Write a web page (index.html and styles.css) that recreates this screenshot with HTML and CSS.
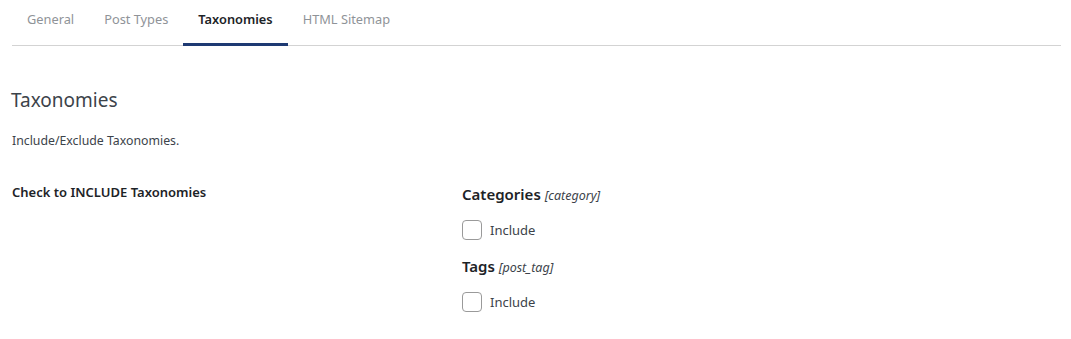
FILE: index.html
```html
<!DOCTYPE html>
<html lang="en">
<head>
    <meta charset="UTF-8">
    <meta name="viewport" content="width=device-width, initial-scale=1.0">
    <title>Taxonomies</title>
    <link rel="stylesheet" href="styles.css">
</head>
<body>
    <div class="wrap">
        <nav class="tabs">
            <a class="tab">General</a>
            <a class="tab">Post Types</a>
            <a class="tab active">Taxonomies</a>
            <a class="tab">HTML Sitemap</a>
        </nav>

        <section class="panel">
            <h2 class="title">Taxonomies</h2>
            <p class="desc">Include/Exclude Taxonomies.</p>

            <div class="row">
                <div class="row-label">Check to INCLUDE Taxonomies</div>
                <div class="row-field">
                    <div class="tax">
                        <div class="tax-name">Categories <em>[category]</em></div>
                        <label class="check"><span class="box"></span>Include</label>
                    </div>
                    <div class="tax">
                        <div class="tax-name">Tags <em>[post_tag]</em></div>
                        <label class="check"><span class="box"></span>Include</label>
                    </div>
                </div>
            </div>
        </section>
    </div>
</body>
</html>
```

FILE: styles.css
```css
body {
    margin: 0;
    background-color: #ffffff;
    font-family: "Noto Sans", "Open Sans", Arial, sans-serif;
    color: #3c434a;
}

.wrap {
    padding: 0 10px 0 12px;
}

.tabs {
    display: flex;
    border-bottom: 1px solid #d3d3d3;
    height: 45px;
}

.tab {
    display: flex;
    align-items: center;
    padding: 0 15px 5px;
    font-size: 12.8px;
    color: #8f9398;
    cursor: pointer;
    border-bottom: 3px solid transparent;
    margin-bottom: -1px;
}

.tab.active {
    color: #1d2327;
    font-weight: 600;
    border-bottom-color: #1e3a73;
}

.panel {
    padding-top: 41px;
}

.title {
    margin: 0;
    font-size: 19px;
    font-weight: 400;
    color: #3c434a;
    line-height: 26px;
    margin-left: -1px;
}

.desc {
    margin: 20px 0 0;
    font-size: 12.3px;
    line-height: 16px;
    color: #3c434a;
}

.row {
    display: flex;
    margin-top: 33px;
}

.row-label {
    width: 450px;
    font-size: 13px;
    font-weight: 600;
    color: #1d2327;
    line-height: 20px;
}

.row-field {
    display: flex;
    flex-direction: column;
    gap: 16px;
    padding-top: 2px;
}

.tax-name {
    font-size: 15px;
    font-weight: 600;
    color: #1d2327;
    line-height: 20px;
}

.tax-name em {
    font-size: 12.5px;
    font-weight: 400;
    color: #3c434a;
}

.check {
    display: flex;
    align-items: center;
    gap: 8px;
    margin-top: 14px;
    font-size: 13px;
    color: #3c434a;
}

.box {
    width: 18px;
    height: 18px;
    border: 1px solid #9a9a9a;
    border-radius: 4px;
    box-sizing: content-box;
}
```
